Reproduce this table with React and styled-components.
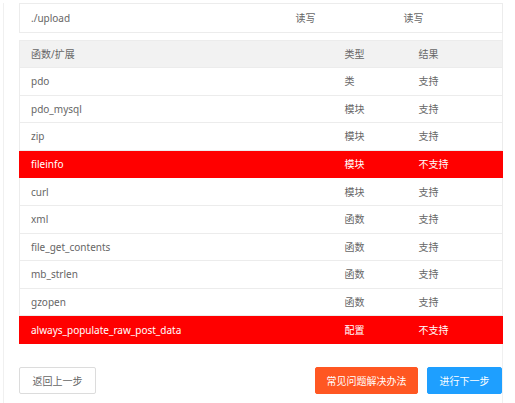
import React from "react";
import styled, { createGlobalStyle } from "styled-components";

const GlobalStyle = createGlobalStyle`
  html, body {
    margin: 0;
    padding: 0;
    background: #fff;
  }
  body {
    font-family: "Noto Sans", "Noto Sans CJK SC", sans-serif;
    color: #666;
  }
`;

const dirs = [["./upload", "读写", "读写"]];

const checks = [
  ["pdo", "类", true],
  ["pdo_mysql", "模块", true],
  ["zip", "模块", true],
  ["fileinfo", "模块", false],
  ["curl", "模块", true],
  ["xml", "函数", true],
  ["file_get_contents", "函数", true],
  ["mb_strlen", "函数", true],
  ["gzopen", "函数", true],
  ["always_populate_raw_post_data", "配置", false],
];

const Page = styled.div`
  padding: 3px 0 0 3px;
`;

const Frame = styled.div`
  width: 500px;
  box-sizing: border-box;
  border-left: 1px solid #f0f0f0;
  border-right: 1px solid #f0f0f0;
  padding: 0 1px 12px 15px;
  min-height: 400px;
`;

const Table = styled.table`
  width: 483px;
  border-collapse: collapse;
  table-layout: fixed;
  font-size: 10px;
  margin-bottom: ${(p) => p.$gap || 0}px;
`;

const Col = styled.col`
  width: ${(p) => p.$w}px;
`;

const Row = styled.tr`
  height: ${(p) => p.$h || 27.6}px;
  background: ${(p) => (p.$bad ? "#ff0000" : p.$head ? "#f2f2f2" : "#fff")};
  color: ${(p) => (p.$bad ? "#fff" : "#666")};
`;

const Cell = styled.td`
  border: 1px solid #ececec;
  border-left: ${(p) => (p.$first ? "1px solid #ececec" : "none")};
  border-right: ${(p) => (p.$last ? "1px solid #ececec" : "none")};
  padding: 0 11px;
  white-space: nowrap;
  line-height: 14px;
  ${Row}[data-bad="1"] & {
    border-color: #ff0000;
  }
`;

const Actions = styled.div`
  width: 483px;
  display: flex;
  align-items: center;
  gap: 9px;
`;

const Spacer = styled.div`
  flex: 1;
`;

const Button = styled.button`
  height: 27px;
  padding: 0 ${(p) => p.$px || 12}px;
  border-radius: 2px;
  font-family: inherit;
  font-size: 10px;
  cursor: pointer;
  border: 1px solid ${(p) => (p.$bg ? p.$bg : "#dcdcdc")};
  background: ${(p) => p.$bg || "#fff"};
  color: ${(p) => (p.$bg ? "#fff" : "#666")};
`;

export default function App() {
  return (
    <Page>
      <GlobalStyle />
      <Frame>
        <Table $gap={7}>
          <colgroup>
            <Col $w={265} />
            <Col $w={108} />
            <Col $w={110} />
          </colgroup>
          <tbody>
            {dirs.map((d) => (
              <Row key={d[0]} $h={29}>
                <Cell $first>{d[0]}</Cell>
                <Cell>{d[1]}</Cell>
                <Cell $last>{d[2]}</Cell>
              </Row>
            ))}
          </tbody>
        </Table>
        <Table $gap={23}>
          <colgroup>
            <Col $w={314} />
            <Col $w={74} />
            <Col $w={95} />
          </colgroup>
          <thead>
            <Row $head $h={27}>
              <Cell $first>函数/扩展</Cell>
              <Cell>类型</Cell>
              <Cell $last>结果</Cell>
            </Row>
          </thead>
          <tbody>
            {checks.map(([name, type, ok]) => (
              <Row key={name} $bad={!ok} data-bad={ok ? "0" : "1"}>
                <Cell $first>{name}</Cell>
                <Cell>{type}</Cell>
                <Cell $last>{ok ? "支持" : "不支持"}</Cell>
              </Row>
            ))}
          </tbody>
        </Table>
        <Actions>
          <Button $px={12.5}>返回上一步</Button>
          <Spacer />
          <Button $bg="#ff5722" $px={10.5}>常见问题解决办法</Button>
          <Button $bg="#1e9fff" $px={11.5}>进行下一步</Button>
        </Actions>
      </Frame>
    </Page>
  );
}
